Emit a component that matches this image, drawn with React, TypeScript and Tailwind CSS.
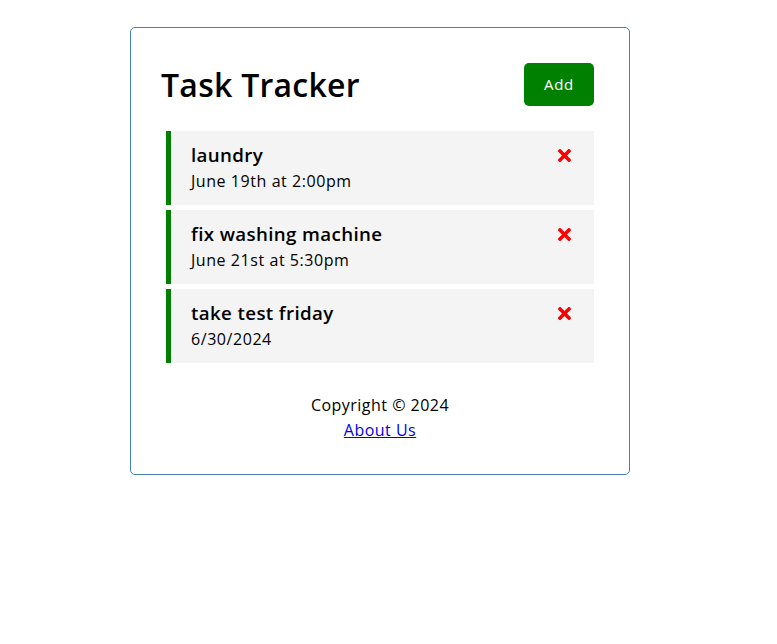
import { FaTimes } from "react-icons/fa";

const tasks = [
  { id: 1, text: "laundry", day: "June 19th at 2:00pm" },
  { id: 2, text: "fix washing machine", day: "June 21st at 5:30pm" },
  { id: 3, text: "take test friday", day: "6/30/2024" },
];

const Task = ({ task }: any) => (
  <div className="bg-[#f4f4f4] border-l-[5px] border-[#008000] pl-5 pr-5 pt-[10px] pb-3 cursor-pointer">
    <h3 className="flex items-center justify-between text-[18.72px] leading-[28px] font-semibold tracking-[0.02em]">
      {task.text}
      <FaTimes className="text-[#ff0000] text-[19px]" />
    </h3>
    <p className="text-base leading-6 tracking-[0.035em]">{task.day}</p>
  </div>
);

export default function App() {
  return (
    <div
      className="min-h-screen bg-white text-black"
      style={{ fontFamily: "'Open Sans', 'Noto Sans', sans-serif" }}
    >
      <div className="w-[500px] ml-[130px] mt-[27px] border border-[#4682b4] rounded-[5px] p-[30px] pb-[31px] min-h-[300px]">
        <header className="flex items-center justify-between mb-5">
          <h1 className="text-[32px] font-semibold leading-[43px] tracking-[0.008em]">Task Tracker</h1>
          <button className="bg-[#008000] text-white rounded-[5px] m-[5px] px-5 py-[10px] text-[15px] leading-[23px] tracking-[0.05em]">
            Add
          </button>
        </header>
        <div className="flex flex-col gap-[5px] mx-[5px]">
          {tasks.map((t) => (
            <Task key={t.id} task={t} />
          ))}
        </div>
        <footer className="mt-[30px] text-center text-base leading-6 tracking-[0.03em]">
          <p>Copyright © 2024</p>
          <a href="#" className="text-[#0000ee] underline leading-[25px] block pt-px">
            About Us
          </a>
        </footer>
      </div>
    </div>
  );
}
